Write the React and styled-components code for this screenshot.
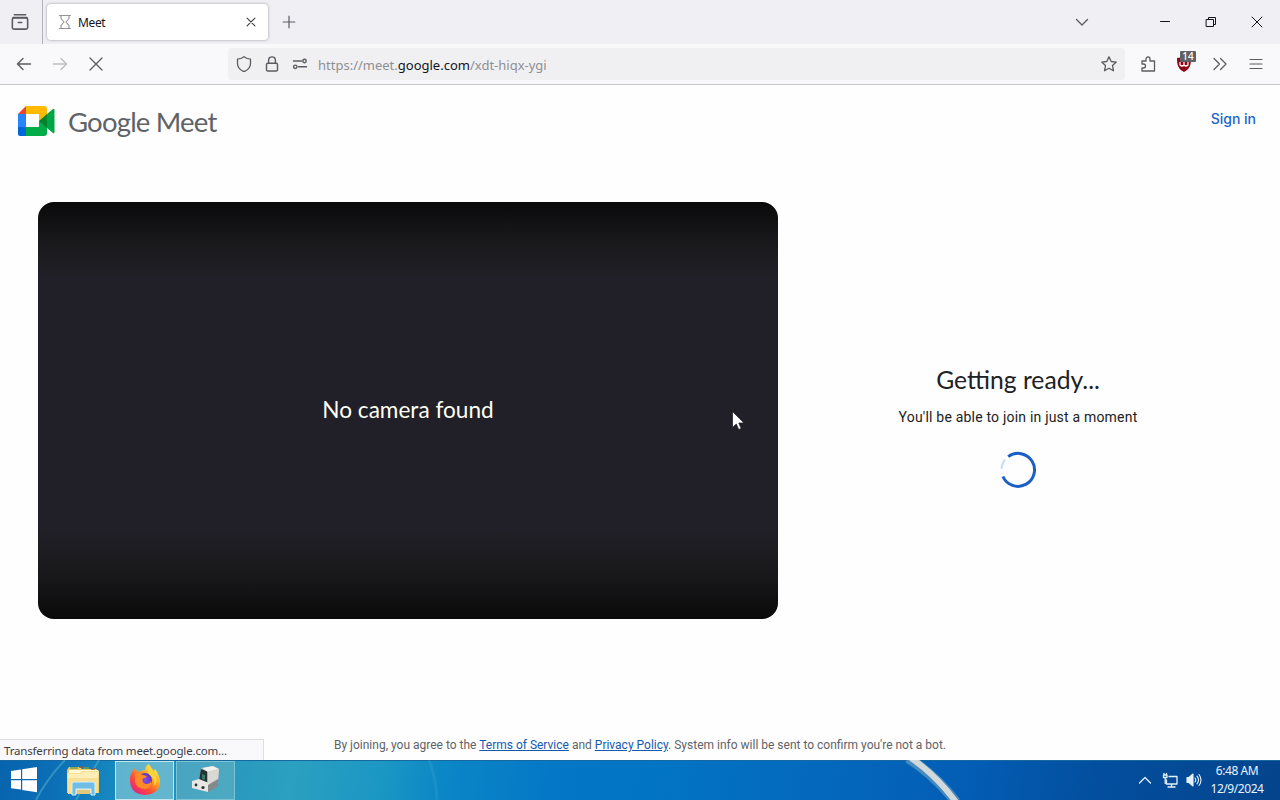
import React from "react";
import styled, { createGlobalStyle } from "styled-components";

const GlobalStyle = createGlobalStyle`
  * {
    box-sizing: border-box;
  }
  body {
    margin: 0;
    background-color: #fefefe;
    overflow: hidden;
  }
  svg {
    display: block;
    flex: none;
  }
`;

const StyledScreen = styled.div`
  display: flex;
  flex-direction: column;
  width: 1280px;
  height: 800px;
  overflow: hidden;
  font-family: "Noto Sans", sans-serif;
`;

const StyledTabBar = styled.div`
  display: flex;
  align-items: center;
  height: 44px;
  background-color: #f0f0f4;
`;

const StyledSlot = styled.div`
  display: flex;
  flex: none;
  align-items: center;
  justify-content: center;
  width: ${(props) => props.$width || 36}px;
  height: 100%;
  color: ${(props) => props.$color || "#5b5b62"};
`;

const StyledDivider = styled.div`
  width: 1px;
  height: 100%;
  margin-left: 2px;
  background-color: #b2b2ba;
`;

const StyledTab = styled.div`
  display: flex;
  align-items: center;
  width: 221px;
  height: 36px;
  margin-left: 4px;
  padding: 0 6px 0 9px;
  border-radius: 4px;
  background-color: white;
  box-shadow: 0 0 3px rgba(90, 90, 110, 0.6);
`;

const StyledTabTitle = styled.span`
  flex: 1;
  padding-left: 4px;
  color: #15141a;
  font-size: 12px;
  letter-spacing: -0.35px;
`;

const StyledSpacer = styled.div`
  flex: 1;
`;

const StyledWindowButtons = styled.div`
  display: flex;
  height: 100%;
  margin-left: 40px;
`;

const StyledToolbar = styled.div`
  display: flex;
  align-items: center;
  height: 41px;
  padding: 0 6px;
  background-color: #f9f9fb;
  border-bottom: 1px solid #c6c6ca;
`;

const StyledUrlBar = styled.div`
  display: flex;
  align-items: center;
  width: 897px;
  height: 32px;
  margin: 0 5px 0 114px;
  padding-left: 2px;
  border-radius: 3px;
  background-color: #f0f0f2;
`;

const StyledUrl = styled.p`
  flex: 1;
  margin: 0;
  padding: 1px 0 0 4px;
  color: #8f8f94;
  font-size: 13px;
`;

const StyledDomain = styled.span`
  color: #15141a;
`;

const StyledExtension = styled.div`
  position: relative;
  display: flex;
`;

const StyledBadge = styled.span`
  position: absolute;
  top: -5px;
  left: 4px;
  width: 16px;
  height: 11px;
  border-radius: 1px;
  background-color: #5f6265;
  color: white;
  font-size: 10px;
  font-weight: 500;
  line-height: 11px;
  text-align: center;
`;

const StyledPage = styled.main`
  display: flex;
  flex-direction: column;
  position: relative;
  height: 675px;
  background-color: #fefefe;
`;

const StyledHeader = styled.header`
  display: flex;
  align-items: center;
  height: 73px;
  padding: 0 24px 0 17px;
`;

const StyledBrand = styled.span`
  padding-left: 12px;
  color: #5f6368;
  font-family: Lato, sans-serif;
  font-size: 27.5px;
  line-height: 32px;
  letter-spacing: -0.8px;
`;

const StyledSignIn = styled.a`
  margin-top: -6px;
  color: #1a66c9;
  font-family: Inter, sans-serif;
  font-size: 14px;
  font-weight: 500;
`;

const StyledContent = styled.section`
  display: flex;
  align-items: center;
  height: 417px;
  margin-top: 44px;
  padding-left: 38px;
`;

const StyledPreview = styled.div`
  display: flex;
  align-items: center;
  justify-content: center;
  width: 740px;
  height: 417px;
  padding-bottom: 2px;
  border-radius: 16px;
  background: linear-gradient(
    #0a0a0b,
    #19191b 40px,
    #212028 76px,
    #212028 325px,
    #19191b 371px,
    #0a0a0b
  );
  color: #fffff6;
  font-family: Lato, sans-serif;
  font-size: 22.6px;
`;

const StyledStatus = styled.div`
  display: flex;
  flex-direction: column;
  align-items: center;
  width: 480px;
  padding-top: 32px;
`;

const StyledStatusTitle = styled.h1`
  margin: 0;
  color: #202124;
  font-family: Lato, sans-serif;
  font-size: 24.7px;
  font-weight: 400;
  line-height: 31px;
`;

const StyledStatusText = styled.p`
  margin: 12px 0 24px;
  color: #202124;
  font-family: Roboto, sans-serif;
  font-size: 14px;
  line-height: 20px;
  letter-spacing: 0.2px;
`;

const StyledTerms = styled.p`
  margin: 118px 0 0;
  color: #5f6368;
  font-family: Roboto, sans-serif;
  font-size: 12px;
  line-height: 16px;
  text-align: center;
`;

const StyledLink = styled.a`
  color: #1759ad;
  text-decoration: underline;
`;

const StyledLoadingStatus = styled.div`
  position: absolute;
  left: 0;
  bottom: 0;
  width: 264px;
  height: 21px;
  padding-left: 4px;
  border: 1px solid #dedee2;
  border-width: 1px 1px 0 0;
  background-color: #f9f9fb;
  color: #3c3c42;
  font-size: 11.5px;
  line-height: 21px;
  letter-spacing: -0.17px;
  white-space: nowrap;
`;

const StyledPointer = styled.div`
  position: absolute;
  left: 732px;
  top: 326px;
`;

const StyledTaskbar = styled.footer`
  display: flex;
  align-items: center;
  position: relative;
  height: 40px;
  background: linear-gradient(
    100deg,
    #0763ad 0,
    #0c70b7 60px,
    #1686bf 110px,
    #2999bd 230px,
    #2ba0c0 290px,
    #1b97c4 380px,
    #0b86c6 440px,
    #0376c6 560px,
    #0274c4 650px,
    #0467bb 830px,
    #035db4 960px,
    #034f9f 1080px,
    #04438b 1280px
  );
  box-shadow: inset 0 1px #17689d;
`;

const StyledLightRays = styled.div`
  position: absolute;
  inset: 0;
`;

const StyledTask = styled.div`
  display: flex;
  align-items: center;
  justify-content: center;
  position: relative;
  width: ${(props) => props.$width}px;
  height: 39px;
  margin-left: ${(props) => props.$gap || 0}px;
  border: 1px solid ${(props) => props.$border || "transparent"};
  background-color: ${(props) => props.$fill || "transparent"};
`;

const StyledTray = styled.div`
  display: flex;
  align-items: center;
  position: relative;
  height: 40px;
  margin-left: auto;
  padding-right: 12px;
`;

const StyledClock = styled.div`
  width: 62px;
  color: #e9f4ff;
  font-size: 12px;
  line-height: 18px;
  letter-spacing: -0.45px;
  text-align: center;
  white-space: nowrap;
`;

function LineIcon({ size = 16, width = 1.2, children }) {
  return (
    <svg
      width={size}
      height={size}
      viewBox="0 0 16 16"
      fill="none"
      stroke="currentColor"
      strokeWidth={width}
      strokeLinecap="round"
      strokeLinejoin="round"
    >
      {children}
    </svg>
  );
}

function MeetLogo() {
  return (
    <svg width="39" height="33" viewBox="0 0 39 33">
      <path d="M1 9h8v13H1z" fill="#2684fc" />
      <path d="M1 22h8v9H3q-2 0-2-2z" fill="#0066da" />
      <path d="M9 1v8H1z" fill="#ea4335" />
      <path d="M9 1h18q3 0 3 3v7l-8 6V9H9z" fill="#ffba00" />
      <path d="M9 22h13v-6l8 3v9q0 3-3 3H9z" fill="#00ac47" />
      <path d="M22 16l8-7v14z" fill="#00832d" />
      <path d="M30 9l6-5q1.500-1 1.500 1v22q0 2-1.500 1l-6-5z" fill="#00a646" />
    </svg>
  );
}

function Spinner() {
  return (
    <svg width="38" height="38" viewBox="0 0 38 38" fill="none">
      <path d="M2.500 18A16.500 16.500 0 0 1 6 8.500" stroke="#c5dcfa" strokeWidth="2" />
      <path
        d="M9.200 5.600A16.500 16.500 0 1 1 3.900 25.500"
        stroke="#1b5fc4"
        strokeWidth="3"
      />
    </svg>
  );
}

function WindowsIcon() {
  return (
    <svg width="28" height="28" viewBox="0 0 28 28" fill="white">
      <path d="M1 5l10-1.500V13H1zM12.200 3.300L27 1v12H12.200zM1 14.300h10v9.300L1 22.200zM12.200 14.300H27v12L12.200 24z" />
    </svg>
  );
}

function FolderIcon() {
  return (
    <svg width="36" height="34" viewBox="0 0 36 34">
      <path d="M2 7l2-3h11l2 2h14l3 2v22H2z" fill="#e9ca6b" />
      <path d="M5 5h8M18 5h6" stroke="#6f9c4c" strokeWidth="1.500" />
      <path d="M14 4h4M26 6h4" stroke="#8f5a3c" strokeWidth="1.500" />
      <path d="M4 7h29v4H4z" fill="#fff8d6" />
      <path d="M2 10h13l2-2h17l-1 22-30 1z" fill="#f8df91" />
      <path d="M3 11h13l2-2h15v6H3z" fill="#fdeeb5" />
      <path d="M7 21q0-2 2-2h19q2 0 2 2v11h-4v-6H11v6H7z" fill="#70bee5" stroke="#d3f0fc" />
      <path d="M12 27h13v4H12z" fill="#e2c878" />
    </svg>
  );
}

function FirefoxIcon() {
  return (
    <svg width="32" height="34" viewBox="0 0 32 34">
      <defs>
        <linearGradient id="fire" x1="0.850" y1="0.100" x2="0.200" y2="0.900">
          <stop offset="0" stopColor="#fff04a" />
          <stop offset="0.400" stopColor="#ff9a22" />
          <stop offset="0.700" stopColor="#ff4d35" />
          <stop offset="1" stopColor="#e72778" />
        </linearGradient>
        <radialGradient id="globe">
          <stop offset="0" stopColor="#8c4dea" />
          <stop offset="1" stopColor="#5737bd" />
        </radialGradient>
      </defs>
      <path
        d="M6 5q1 3 4 4 3-2 6-2 0-4 4-6 1 4 5 7l1-2q4 5 5 12 0 13-15 14Q1 31 1 17 1 10 6 5z"
        fill="url(#fire)"
      />
      <circle cx="16" cy="17" r="7" fill="url(#globe)" />
      <path
        d="M6 11q3-2 8 1l4 1q-1 2-4 2.500-2 4 3 5.500 4 0 5-3 1 7-6 8Q8 26 6 19z"
        fill="#ff8a27"
      />
      <path d="M20 2q-4 7 3 12 4 5 1 10 6-5 2-13-1-4-6-9z" fill="#ffd43a" />
    </svg>
  );
}

function DeviceIcon() {
  return (
    <svg width="32" height="30" viewBox="0 0 32 30">
      <path d="M11 3l12-2 6 3-1 16-10 6-8-5z" fill="#a9aaa9" />
      <path d="M12 3l11-2 6 3-11 3z" fill="#f2f1ed" />
      <path d="M18 7l11-3-1 11-10 5z" fill="#d9d8d3" />
      <path d="M11 4l6 2.500v12L9 16z" fill="#243232" />
      <path d="M12 9l3 1v5l-3-1z" fill="#3b7469" />
      <path d="M2 16l7-2 10 4-1 9-16-4z" fill="#e7e6e3" />
      <path d="M18 20l10-6v7l-10 6z" fill="#858988" />
      <circle cx="6" cy="20" r="1.400" fill="#283437" />
      <circle cx="13" cy="22.500" r="1.600" fill="#283437" />
    </svg>
  );
}

function BrowserTabs() {
  return (
    <StyledTabBar>
      <StyledSlot $width={40}>
        <LineIcon size={18} width={1.4}>
          <path d="M3 1.500h10M1.800 4h12.400" />
          <rect x="1.200" y="4.300" width="13.600" height="10" rx="1.500" />
          <path d="M6.500 8.500h3" />
        </LineIcon>
      </StyledSlot>
      <StyledDivider />
      <StyledTab>
        <StyledSlot $width={18} $color="#93939a">
          <LineIcon width={1.1}>
            <path d="M2.500 1.500h11M2.500 14.500h11M4 1.500v3L7 8l-3 3.500v3M12 1.500v3L9 8l3 3.500v3" />
          </LineIcon>
        </StyledSlot>
        <StyledTabTitle>Meet</StyledTabTitle>
        <StyledSlot $width={22} $color="#38383d">
          <LineIcon size={14}>
            <path d="M3.500 3.500l9 9M12.500 3.500l-9 9" />
          </LineIcon>
        </StyledSlot>
      </StyledTab>
      <StyledSlot $width={42}>
        <LineIcon>
          <path d="M8 2.200v11.600M2.200 8h11.600" />
        </LineIcon>
      </StyledSlot>
      <StyledSpacer />
      <StyledSlot $width={40}>
        <LineIcon width={1.4}>
          <path d="M2.500 5.500L8 11l5.500-5.500" />
        </LineIcon>
      </StyledSlot>
      <StyledWindowButtons>
        <StyledSlot $width={46} $color="#15141a">
          <LineIcon width={1}>
            <path d="M3.500 7.500h9" />
          </LineIcon>
        </StyledSlot>
        <StyledSlot $width={46} $color="#15141a">
          <LineIcon width={1}>
            <path d="M3.500 5.500h7v7h-7zM5.500 5.500v-2h7v7h-2" />
          </LineIcon>
        </StyledSlot>
        <StyledSlot $width={46} $color="#15141a">
          <LineIcon width={1}>
            <path d="M3 3l10 10M13 3L3 13" />
          </LineIcon>
        </StyledSlot>
      </StyledWindowButtons>
    </StyledTabBar>
  );
}

function AddressBar() {
  return (
    <StyledToolbar>
      <StyledSlot>
        <LineIcon width={1.4}>
          <path d="M14.500 8h-13M7 2.500L1.500 8 7 13.500" />
        </LineIcon>
      </StyledSlot>
      <StyledSlot $color="#bdbdc1">
        <LineIcon width={1.4}>
          <path d="M1.500 8h13M9 2.500L14.500 8 9 13.500" />
        </LineIcon>
      </StyledSlot>
      <StyledSlot>
        <LineIcon width={1.3}>
          <path d="M2 2l12 12M14 2L2 14" />
        </LineIcon>
      </StyledSlot>
      <StyledUrlBar>
        <StyledSlot $width={28}>
          <LineIcon width={1.3}>
            <path d="M8 .7q3 2.200 6.500 2.500v4c0 4-2 6.500-6.500 8.500-4.500-2-6.500-4.500-6.500-8.500v-4Q5 2.900 8 .7z" />
          </LineIcon>
        </StyledSlot>
        <StyledSlot $width={28}>
          <LineIcon width={1.4}>
            <rect x="2.500" y="7.300" width="11" height="7.700" rx="1.300" />
            <path d="M4.600 7V4.300a3.400 3.400 0 0 1 6.800 0V7" />
          </LineIcon>
        </StyledSlot>
        <StyledSlot $width={28}>
          <LineIcon width={1.4}>
            <path d="M1.500 5h8M6.500 10.800h8" />
            <circle cx="12.500" cy="5" r="1.700" />
            <circle cx="3.300" cy="10.800" r="1.700" />
          </LineIcon>
        </StyledSlot>
        <StyledUrl>
          https://meet.<StyledDomain>google.com</StyledDomain>/xdt-hiqx-ygi
        </StyledUrl>
        <StyledSlot $width={32}>
          <LineIcon width={1.3}>
            <path d="M8 .8l2.200 4.700 5.100.6-3.800 3.500 1 5.200L8 12.300l-4.500 2.500 1-5.200L.7 6.100l5.100-.6z" />
          </LineIcon>
        </StyledSlot>
      </StyledUrlBar>
      <StyledSlot>
        <LineIcon width={1.3}>
          <path d="M2 5h4V3a2 2 0 0 1 4 0v2h4.500v10H2v-3h1.500a2 2 0 0 0 0-4H2z" />
        </LineIcon>
      </StyledSlot>
      <StyledSlot>
        <StyledExtension>
          <svg width="16" height="16" viewBox="0 0 16 16">
            <path d="M8 0q3 2 7 2c0 7-1 11-7 14C2 13 1 9 1 2q4 0 7-2z" fill="#8d0616" />
            <path d="M4 6v3q2 2 4 0 2 2 4 0V6M8 6v3" stroke="white" strokeWidth="1.200" fill="none" />
          </svg>
          <StyledBadge>14</StyledBadge>
        </StyledExtension>
      </StyledSlot>
      <StyledSlot $width={35}>
        <LineIcon width={1.3}>
          <path d="M2 2.500L7.500 8 2 13.500M8.500 2.500L14 8l-5.500 5.500" />
        </LineIcon>
      </StyledSlot>
      <StyledSlot $width={37}>
        <LineIcon width={1.1}>
          <path d="M2 3.500h12M2 8h12M2 12.500h12" />
        </LineIcon>
      </StyledSlot>
    </StyledToolbar>
  );
}

function MeetPage() {
  return (
    <StyledPage>
      <StyledHeader>
        <MeetLogo />
        <StyledBrand>Google Meet</StyledBrand>
        <StyledSpacer />
        <StyledSignIn>Sign in</StyledSignIn>
      </StyledHeader>
      <StyledContent>
        <StyledPreview>No camera found</StyledPreview>
        <StyledStatus>
          <StyledStatusTitle>Getting ready...</StyledStatusTitle>
          <StyledStatusText>You'll be able to join in just a moment</StyledStatusText>
          <Spinner />
        </StyledStatus>
      </StyledContent>
      <StyledTerms>
        By joining, you agree to the <StyledLink>Terms of Service</StyledLink> and{" "}
        <StyledLink>Privacy Policy</StyledLink>. System info will be sent to confirm
        you're not a bot.
      </StyledTerms>
      <StyledLoadingStatus>Transferring data from meet.google.com...</StyledLoadingStatus>
      <StyledPointer>
        <svg width="13" height="20" viewBox="0 0 13 20">
          <path
            d="M.5.500v16l3.800-3.500 2.400 5.500 2.500-1-2.400-5.500H12z"
            fill="white"
            stroke="#17171b"
            strokeWidth="0.700"
          />
        </svg>
      </StyledPointer>
    </StyledPage>
  );
}

function Taskbar() {
  return (
    <StyledTaskbar>
      <StyledLightRays>
        <svg width="1280" height="40" viewBox="0 0 1280 40" fill="none">
          <path d="M36 40Q46 20 65 0M76 40L99 0" stroke="#6cc6cf" strokeWidth="2" opacity="0.400" />
          <path d="M429 0q7 18 8 40" stroke="#4bb0dc" strokeWidth="3" opacity="0.200" />
          <path d="M908-2q27 17 48 44" stroke="#75a7c5" strokeWidth="10" opacity="0.600" />
          <path d="M911-2q25 17 45 44" stroke="#d3d8da" strokeWidth="6" />
        </svg>
      </StyledLightRays>
      <StyledTask $width={48}>
        <WindowsIcon />
      </StyledTask>
      <StyledTask $width={60} $gap={5}>
        <FolderIcon />
      </StyledTask>
      <StyledTask $width={59} $gap={2} $border="#c1e8ee" $fill="rgba(145, 208, 217, 0.6)">
        <FirefoxIcon />
      </StyledTask>
      <StyledTask $width={59} $gap={2} $border="#7bc4d4" $fill="rgba(113, 183, 200, 0.5)">
        <DeviceIcon />
      </StyledTask>
      <StyledTray>
        <StyledSlot $width={25} $color="#e5f1fa">
          <LineIcon width={1.3}>
            <path d="M2.500 11L8 5.500l5.500 5.500" />
          </LineIcon>
        </StyledSlot>
        <StyledSlot $width={25} $color="#e5f1fa">
          <LineIcon width={1.3}>
            <path d="M7 4.500h8v7.500H4.500V8M6 15h7M9.500 12v3" />
            <path d="M1.500 3H5v2.500H1.500zM2 1.300V3M4.500 1.300V3M3.200 6v5.500" />
          </LineIcon>
        </StyledSlot>
        <StyledSlot $width={24} $color="#e5f1fa">
          <LineIcon width={1.1}>
            <path d="M1 5.500h2l4-3.500v12l-4-3.500H1z" fill="currentColor" />
            <path d="M9 6q1.500 2 0 4M11 4.200q3 3.800 0 7.600M13 2.500q4 5.500 0 11" />
          </LineIcon>
        </StyledSlot>
        <StyledClock>
          6:48 AM
          <br />
          12/9/2024
        </StyledClock>
      </StyledTray>
    </StyledTaskbar>
  );
}

function App() {
  return (
    <>
      <GlobalStyle />
      <StyledScreen>
        <BrowserTabs />
        <AddressBar />
        <MeetPage />
        <Taskbar />
      </StyledScreen>
    </>
  );
}

export default App;
